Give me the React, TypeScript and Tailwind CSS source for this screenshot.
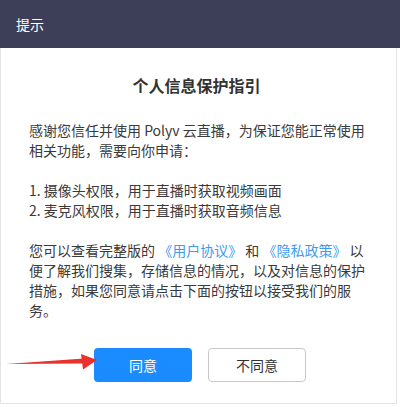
import React from "react";

export default function App() {
  const font = { fontFamily: '"Noto Sans CJK SC", "Noto Sans", sans-serif' };
  return (
    <div className="relative w-[400px] h-[407px] bg-white overflow-hidden" style={font}>
      <div className="w-[400px] h-[48px] bg-[#3d3f59] flex items-center pl-[16px]">
        <span className="text-white text-[14px] leading-[20px]">提示</span>
      </div>
      <div className="w-[397px] h-[356px] border-x border-b border-[#e4e4e4] flex flex-col">
        <div className="pt-[25px] text-center pr-[4px] text-[16px] leading-[24px] font-bold text-[#333]">
          个人信息保护指引
        </div>
        <div className="pt-[23px] pl-[28px] text-[14px] leading-[20px] text-[#3a3a3a] whitespace-nowrap">
          <div>感谢您信任并使用 Polyv 云直播，为保证您能正常使用</div>
          <div>相关功能，需要向你申请：</div>
          <div className="h-[20px]" />
          <div>1. 摄像头权限，用于直播时获取视频画面</div>
          <div>2. 麦克风权限，用于直播时获取音频信息</div>
          <div className="h-[20px]" />
          <div>
            您可以查看完整版的 <span className="text-[#3d9cf0]">《用户协议》</span> 和{" "}
            <span className="text-[#3d9cf0]">《隐私政策》</span> 以
          </div>
          <div>便了解我们搜集，存储信息的情况，以及对信息的保护</div>
          <div>措施，如果您同意请点击下面的按钮以接受我们的服</div>
          <div>务。</div>
        </div>
        <div className="pt-[28px] pl-[93px] flex gap-[16px]">
          <button className="w-[98px] h-[34px] rounded-[4px] bg-[#1a8cff] text-white text-[14px] leading-[20px]">
            同意
          </button>
          <button className="w-[98px] h-[34px] rounded-[4px] border border-[#c8c8c8] bg-white text-[#333] text-[14px] leading-[20px]">
            不同意
          </button>
        </div>
      </div>
      <svg className="absolute left-0 top-[340px]" width="110" height="40" viewBox="0 340 110 40">
        <polygon points="6,364 84,358.5 85,363.5" fill="#e8322b" />
        <polygon points="81,354 97,360 83,369.5" fill="#e8322b" />
      </svg>
    </div>
  );
}
